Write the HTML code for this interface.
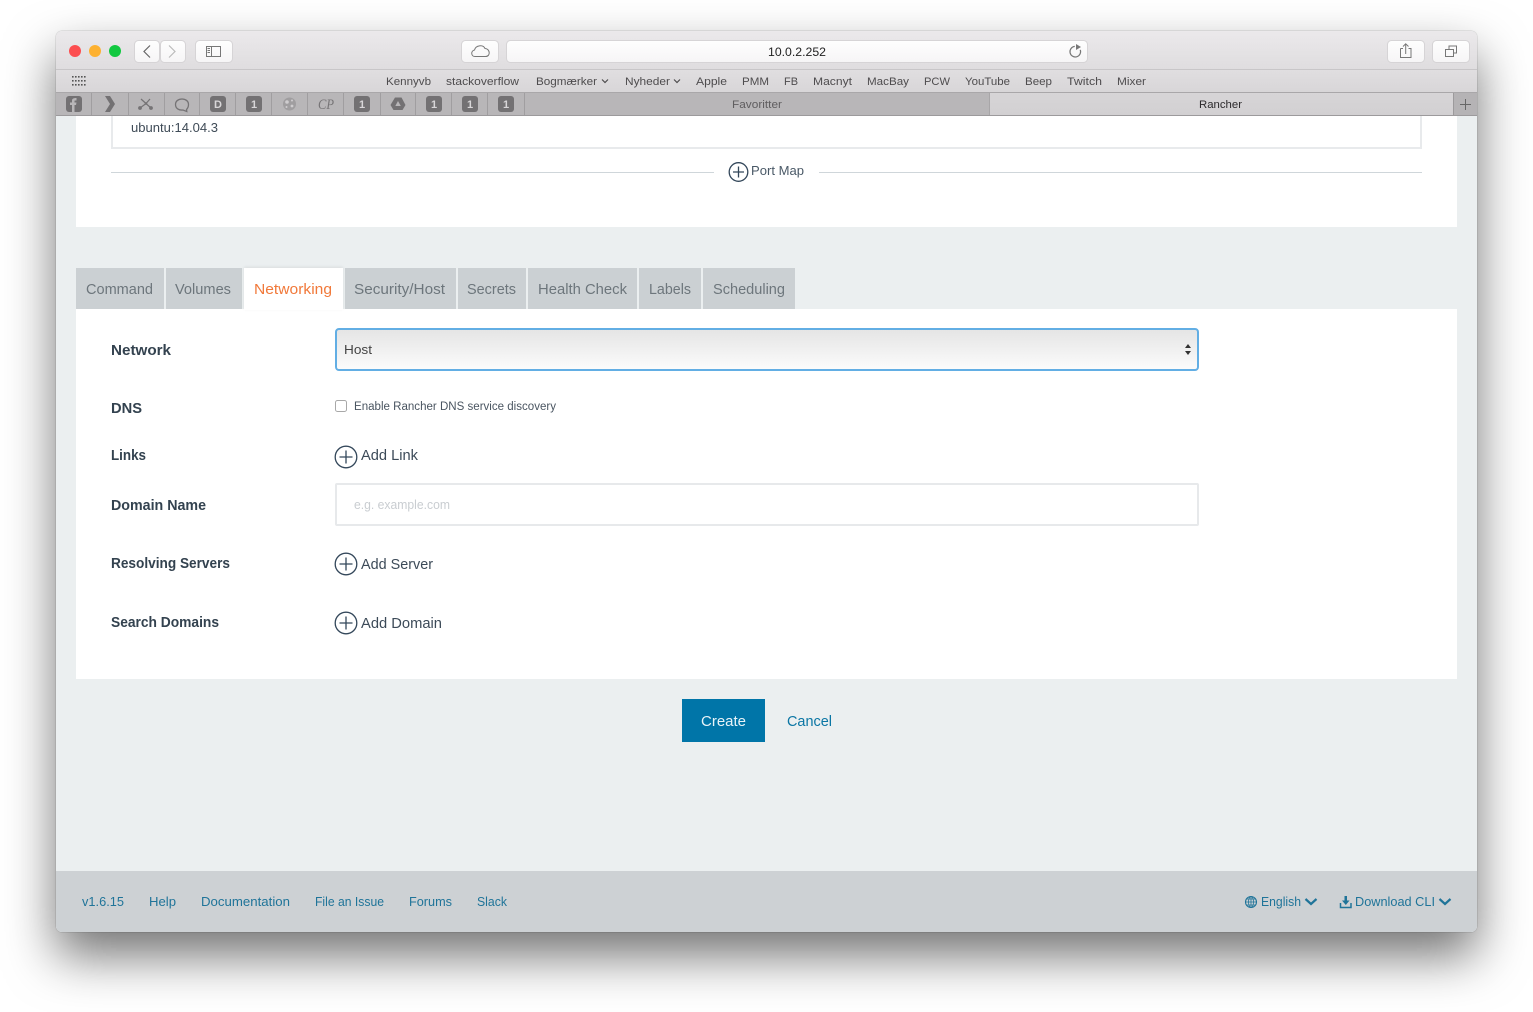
<!DOCTYPE html>
<html><head><meta charset="utf-8">
<style>
html,body{margin:0;padding:0;width:1533px;height:1012px;overflow:hidden;background:#fff}
.a{position:absolute}
svg{position:absolute;left:0;top:0}
text{font-family:"Liberation Sans",sans-serif}
</style></head><body>
<div class="a" style="left:56px;top:31px;width:1421px;height:901px;border-radius:6px;box-shadow:0 24px 50px 0 rgba(0,0,0,.55),0 0 1px rgba(0,0,0,.5)"></div>
<div class="a" id="win" style="left:56px;top:31px;width:1421px;height:901px;border-radius:6px;background:#ebeff0;overflow:hidden">
 <div class="a" style="left:0;top:0;width:1421px;height:38px;background:linear-gradient(#ebe9eb,#dfdddf);border-bottom:1px solid #c8c6c8"></div>
 <div class="a" style="left:0;top:39px;width:1421px;height:22px;background:linear-gradient(#e0dee0,#d8d6d8);border-bottom:1px solid #a9a7a9"></div>
 <div class="a" style="left:0;top:62px;width:933px;height:22px;background:#b8b6b8;border-bottom:1px solid #9c9a9c"></div>
 <div class="a" style="left:933px;top:62px;width:464px;height:22px;background:linear-gradient(#d7d5d7,#d2d0d2);border-bottom:1px solid #9c9a9c;box-shadow:inset 1px 0 0 #a8a6a8"></div>
 <div class="a" style="left:1397px;top:62px;width:23px;height:22px;background:#b5b3b5;border-bottom:1px solid #9c9a9c;border-left:1px solid #9c9a9c"></div>
 <div class="a" style="left:20px;top:85px;width:1381px;height:111px;background:#fff"></div>
 <div class="a" style="left:55px;top:85px;width:1311px;height:33px;box-sizing:border-box;border:2px solid #e8eaec;border-top:0"></div>
 <div class="a" style="left:55px;top:141px;width:603px;height:1px;background:#cfd6da"></div>
 <div class="a" style="left:763px;top:141px;width:603px;height:1px;background:#cfd6da"></div>
 <div class="a" style="left:20px;top:278px;width:1381px;height:370px;background:#fff"></div>
 <div class="a" style="left:20px;top:237px;width:88px;height:41px;background:#cbd0d3"></div>
 <div class="a" style="left:110px;top:237px;width:76px;height:41px;background:#cbd0d3"></div>
 <div class="a" style="left:188px;top:237px;width:99px;height:42px;background:#fff;box-shadow:0 -1px 3px rgba(0,0,0,.08)"></div>
 <div class="a" style="left:289px;top:237px;width:111px;height:41px;background:#cbd0d3"></div>
 <div class="a" style="left:402px;top:237px;width:68px;height:41px;background:#cbd0d3"></div>
 <div class="a" style="left:472px;top:237px;width:109px;height:41px;background:#cbd0d3"></div>
 <div class="a" style="left:583px;top:237px;width:62px;height:41px;background:#cbd0d3"></div>
 <div class="a" style="left:647px;top:237px;width:92px;height:41px;background:#cbd0d3"></div>
 <div class="a" style="left:279px;top:297px;width:864px;height:43px;box-sizing:border-box;border:2px solid #62aee4;border-radius:4px;background:linear-gradient(#e5e5e5,#fbfbfb)"></div>
 <div class="a" style="left:279px;top:452px;width:864px;height:43px;box-sizing:border-box;border:2px solid #e7e9eb;border-radius:2px;background:#fff"></div>
 <div class="a" style="left:279px;top:369px;width:12px;height:12px;box-sizing:border-box;border:1px solid #a8a8a8;border-radius:2.500px;background:#fff"></div>
 <div class="a" style="left:626px;top:668px;width:83px;height:43px;background:#0075a8"></div>
 <div class="a" style="left:0;top:840px;width:1421px;height:61px;background:#cdd1d4"></div>
</div>

<svg width="1533" height="1012" viewBox="0 0 1533 1012">
 <defs><linearGradient id="b" x1="0" y1="0" x2="0" y2="1"><stop offset="0" stop-color="#fefefe"/><stop offset="1" stop-color="#f6f5f6"/></linearGradient></defs>
 <!-- traffic lights -->
 <circle cx="75" cy="51" r="6" fill="#fc4e50"/><circle cx="95" cy="51" r="6" fill="#fdb131"/><circle cx="115" cy="51" r="6" fill="#12c840"/>
 <!-- toolbar buttons -->
 <g fill="url(#b)" stroke="#d6d4d6" stroke-width="1">
  <rect x="134.500" y="40.500" width="25" height="22" rx="4"/>
  <rect x="160.500" y="40.500" width="25" height="22" rx="4"/>
  <rect x="195.500" y="40.500" width="37" height="22" rx="4"/>
  <rect x="461.500" y="40.500" width="37" height="22" rx="4"/>
  <rect x="506.500" y="40.500" width="581" height="22" rx="4"/>
  <rect x="1387.500" y="40.500" width="37" height="22" rx="4"/>
  <rect x="1432.500" y="40.500" width="37" height="22" rx="4"/>
 </g>
 <g fill="none" stroke-width="1.200">
  <path d="M150 45.500L144 51.500L150 57.500" stroke="#666"/>
  <path d="M169 45.500L175 51.500L169 57.500" stroke="#bbb"/>
  <path d="M206.500 46.500H220.500V56.500H206.500ZM211.500 46.500V56.500M207.500 48.500H210M207.500 50.500H210M207.500 52.500H210" stroke="#777" stroke-width="1"/>
  <path d="M475 56.500C471 56.500 470.500 51 474.500 50C475.500 45.500 483 44 485 48.500C490 48.500 491 56.500 485.500 56.500Z" stroke="#777" stroke-width="1"/>
  <path d="M1078.500 47.500A5.300 5.300 0 1 1 1072 47.800" stroke="#777" transform="rotate(35 1075.600 51.500)"/>
  <path d="M1400.500 48.500H1403M1408.500 48.500H1411V57.500H1400.500V48.500M1405.700 54V44M1403 46.500L1405.700 43.800L1408.500 46.500" stroke="#777" stroke-width="1"/>
  <path d="M1445.500 49.500H1453.500V56.500H1445.500ZM1449 49.500V46H1456.500V53H1453.500" stroke="#777" stroke-width="1"/>
  <path d="M1460 104.500H1471M1465.500 99V110" stroke="#666" stroke-width="1"/>
 </g>
 <path d="M1076 44L1081 47L1076 50Z" fill="#777"/>
 <!-- grid icon -->
 <g fill="#555">
  <rect x="72" y="76" width="1.600" height="1.600"/><rect x="75" y="76" width="1.600" height="1.600"/><rect x="78" y="76" width="1.600" height="1.600"/><rect x="81" y="76" width="1.600" height="1.600"/><rect x="84" y="76" width="1.600" height="1.600"/>
  <rect x="72" y="80" width="1.600" height="1.600"/><rect x="75" y="80" width="1.600" height="1.600"/><rect x="78" y="80" width="1.600" height="1.600"/><rect x="81" y="80" width="1.600" height="1.600"/><rect x="84" y="80" width="1.600" height="1.600"/>
  <rect x="72" y="84" width="1.600" height="1.600"/><rect x="75" y="84" width="1.600" height="1.600"/><rect x="78" y="84" width="1.600" height="1.600"/><rect x="81" y="84" width="1.600" height="1.600"/><rect x="84" y="84" width="1.600" height="1.600"/>
 </g>
 <!-- pinned tab separators -->
 <g stroke="#a09ea0" stroke-width="1">
  <path d="M91.500 93V115M128.500 93V115M164.500 93V115M199.500 93V115M235.500 93V115M271.500 93V115M307.500 93V115M343.500 93V115M380.500 93V115M415.500 93V115M451.500 93V115M487.500 93V115M524.500 93V115"/>
 </g>
 <g fill="#737173">
  <rect x="66" y="96" width="16" height="16" rx="3"/>
  <path d="M105 96H110L115 104L110 112H105L110 104Z"/>
  <rect x="210" y="96" width="16" height="16" rx="3"/>
  <rect x="246" y="96" width="16" height="16" rx="3"/>
  <rect x="354" y="96" width="16" height="16" rx="3"/>
  <rect x="426" y="96" width="16" height="16" rx="3"/>
  <rect x="462" y="96" width="16" height="16" rx="3"/>
  <rect x="498" y="96" width="16" height="16" rx="3"/>
  <path d="M395 97.500H401.500L405.500 105L402.500 110H393.500L390.500 105Z"/>
 </g>
 <path d="M398 101L395.300 106H400.800Z" fill="#b8b6b8"/>
 <path d="M72 112V105H70V102.500H72V100.500C72 98.500 74 98 76.500 98V100.500H75C74.700 100.500 74.500 100.800 74.500 101V102.500H76.500L76 105H74.500V112Z" fill="#b8b6b8"/>
 <g fill="none" stroke="#757375">
  <path d="M140 108L146 103.500L151 108M146 103.500L150 99M146 103.500L141 99" stroke-width="1.200"/>
  <path d="M175.500 104.500C175.500 101 178.500 99 182 99C185.500 99 188.500 101 188.500 104.500C188.500 106.500 188 108 186.500 109.500L186.800 111.500L183 110C179 110.500 175.500 108.500 175.500 104.500Z" stroke-width="1.300"/>
 </g>
 <g fill="#757375"><circle cx="140" cy="108" r="1.900"/><circle cx="151" cy="108" r="1.900"/><circle cx="146" cy="103.500" r="1.300"/></g>
 <circle cx="289.500" cy="104" r="6.500" fill="#8f8d8f" opacity=".6"/>
 <circle cx="287" cy="102" r="1.800" fill="#cfcdcf"/><circle cx="292" cy="106" r="1.400" fill="#cfcdcf"/><circle cx="292" cy="100.500" r="1" fill="#cfcdcf"/><circle cx="286.500" cy="107" r="1" fill="#cfcdcf"/>
 <g font-weight="700" fill="#d8d6d8" font-size="11" text-anchor="middle">
  <text x="218" y="108">D</text><text x="254" y="108">1</text><text x="362" y="108">1</text><text x="434" y="108">1</text><text x="470" y="108">1</text><text x="506" y="108">1</text>
 </g>
 <text x="318" y="109" style="font-family:'Liberation Serif',serif" font-style="italic" font-size="15" fill="#767476" textLength="16" lengthAdjust="spacingAndGlyphs">CP</text>

 <!-- browser text -->
 <text x="768" y="56" font-size="12" fill="#222" textLength="58" lengthAdjust="spacingAndGlyphs">10.0.2.252</text>
 <g font-size="11" fill="#4e4c4e">
  <text x="386" y="85" textLength="45" lengthAdjust="spacingAndGlyphs">Kennyvb</text>
  <text x="446" y="85" textLength="73" lengthAdjust="spacingAndGlyphs">stackoverflow</text>
  <text x="536" y="85" textLength="61" lengthAdjust="spacingAndGlyphs">Bogmærker</text>
  <text x="625" y="85" textLength="45" lengthAdjust="spacingAndGlyphs">Nyheder</text>
  <text x="696" y="85" textLength="31" lengthAdjust="spacingAndGlyphs">Apple</text>
  <text x="742" y="85" textLength="27" lengthAdjust="spacingAndGlyphs">PMM</text>
  <text x="784" y="85" textLength="14" lengthAdjust="spacingAndGlyphs">FB</text>
  <text x="813" y="85" textLength="39" lengthAdjust="spacingAndGlyphs">Macnyt</text>
  <text x="867" y="85" textLength="42" lengthAdjust="spacingAndGlyphs">MacBay</text>
  <text x="924" y="85" textLength="26" lengthAdjust="spacingAndGlyphs">PCW</text>
  <text x="965" y="85" textLength="45" lengthAdjust="spacingAndGlyphs">YouTube</text>
  <text x="1025" y="85" textLength="27" lengthAdjust="spacingAndGlyphs">Beep</text>
  <text x="1067" y="85" textLength="35" lengthAdjust="spacingAndGlyphs">Twitch</text>
  <text x="1117" y="85" textLength="29" lengthAdjust="spacingAndGlyphs">Mixer</text>
 </g>
 <path d="M602 79.500L605 82.500L608 79.500M674 79.500L677 82.500L680 79.500" fill="none" stroke="#4e4c4e" stroke-width="1.200"/>
 <text x="732" y="108" font-size="11" fill="#5f5d5f" textLength="50" lengthAdjust="spacingAndGlyphs">Favoritter</text>
 <text x="1199" y="108" font-size="11" fill="#2c2a2c" textLength="43" lengthAdjust="spacingAndGlyphs">Rancher</text>

 <!-- page text -->
 <text x="131" y="132" font-size="13" fill="#3f4b57" textLength="87" lengthAdjust="spacingAndGlyphs">ubuntu:14.04.3</text>
 <text x="751" y="175" font-size="13" fill="#4a5967" textLength="53" lengthAdjust="spacingAndGlyphs">Port Map</text>
 <g font-size="15" fill="#6d767c">
  <text x="86" y="294" textLength="67" lengthAdjust="spacingAndGlyphs">Command</text>
  <text x="175" y="294" textLength="56" lengthAdjust="spacingAndGlyphs">Volumes</text>
  <text x="354" y="294" textLength="91" lengthAdjust="spacingAndGlyphs">Security/Host</text>
  <text x="467" y="294" textLength="49" lengthAdjust="spacingAndGlyphs">Secrets</text>
  <text x="538" y="294" textLength="89" lengthAdjust="spacingAndGlyphs">Health Check</text>
  <text x="649" y="294" textLength="42" lengthAdjust="spacingAndGlyphs">Labels</text>
  <text x="713" y="294" textLength="72" lengthAdjust="spacingAndGlyphs">Scheduling</text>
 </g>
 <text x="254" y="294" font-size="15" fill="#f1793a" textLength="78" lengthAdjust="spacingAndGlyphs">Networking</text>
 <g font-size="15" font-weight="700" fill="#33424f">
  <text x="111" y="355" textLength="60" lengthAdjust="spacingAndGlyphs">Network</text>
  <text x="111" y="413" textLength="31" lengthAdjust="spacingAndGlyphs">DNS</text>
  <text x="111" y="460" textLength="35" lengthAdjust="spacingAndGlyphs">Links</text>
  <text x="111" y="510" textLength="95" lengthAdjust="spacingAndGlyphs">Domain Name</text>
  <text x="111" y="568" textLength="119" lengthAdjust="spacingAndGlyphs">Resolving Servers</text>
  <text x="111" y="627" textLength="108" lengthAdjust="spacingAndGlyphs">Search Domains</text>
 </g>
 <text x="344" y="354" font-size="13" fill="#444" textLength="28" lengthAdjust="spacingAndGlyphs">Host</text>
 <path d="M1185 348L1188 344L1191 348ZM1185 351L1188 355L1191 351Z" fill="#333"/>
 <text x="354" y="410" font-size="11.500" fill="#4a5561" textLength="202" lengthAdjust="spacingAndGlyphs">Enable Rancher DNS service discovery</text>
 <text x="354" y="509" font-size="13" fill="#c9cdd1" textLength="96" lengthAdjust="spacingAndGlyphs">e.g. example.com</text>
 <g font-size="15" fill="#3c4a58">
  <text x="361" y="460" textLength="57" lengthAdjust="spacingAndGlyphs">Add Link</text>
  <text x="361" y="569" textLength="72" lengthAdjust="spacingAndGlyphs">Add Server</text>
  <text x="361" y="628" textLength="81" lengthAdjust="spacingAndGlyphs">Add Domain</text>
 </g>
 <g fill="none" stroke="#33475a" stroke-width="1.300">
  <circle cx="738.500" cy="172" r="9.300"/><path d="M733 172H744M738.500 166.500V177.500"/>
  <circle cx="346" cy="457" r="10.800"/><path d="M339.500 457H352.500M346 450.500V463.500"/>
  <circle cx="346" cy="564" r="10.800"/><path d="M339.500 564H352.500M346 557.500V570.500"/>
  <circle cx="346" cy="623" r="10.800"/><path d="M339.500 623H352.500M346 616.500V629.500"/>
 </g>
 <text x="701" y="726" font-size="15" fill="#e8f3f8" textLength="45" lengthAdjust="spacingAndGlyphs">Create</text>
 <text x="787" y="726" font-size="15" fill="#0b76a4" textLength="45" lengthAdjust="spacingAndGlyphs">Cancel</text>

 <!-- footer -->
 <g font-size="13" fill="#1f7499">
  <text x="82" y="906" textLength="42" lengthAdjust="spacingAndGlyphs">v1.6.15</text>
  <text x="149" y="906" textLength="27" lengthAdjust="spacingAndGlyphs">Help</text>
  <text x="201" y="906" textLength="89" lengthAdjust="spacingAndGlyphs">Documentation</text>
  <text x="315" y="906" textLength="69" lengthAdjust="spacingAndGlyphs">File an Issue</text>
  <text x="409" y="906" textLength="43" lengthAdjust="spacingAndGlyphs">Forums</text>
  <text x="477" y="906" textLength="30" lengthAdjust="spacingAndGlyphs">Slack</text>
  <text x="1261" y="906" textLength="40" lengthAdjust="spacingAndGlyphs">English</text>
  <text x="1355" y="906" textLength="80" lengthAdjust="spacingAndGlyphs">Download CLI</text>
 </g>
 <g fill="none" stroke="#1f7499">
  <circle cx="1251" cy="902" r="5.500" stroke-width="1.100"/>
  <path d="M1245.500 902H1256.500M1246 899H1256M1246 905H1256M1251 896.500V907.500" stroke-width=".8"/>
  <ellipse cx="1251" cy="902" rx="2.500" ry="5.500" stroke-width=".8"/>
  <path d="M1305.500 899L1311 904L1316.500 899M1439.500 899L1445 904L1450.500 899" stroke-width="2.200"/>
  <path d="M1340.500 903V907.500H1351V903" stroke-width="1.500"/>
 </g>
 <path d="M1344.500 896H1347V900.500H1349.500L1345.800 905L1342 900.500H1344.500Z" fill="#1f7499"/>
</svg>
</body></html>
